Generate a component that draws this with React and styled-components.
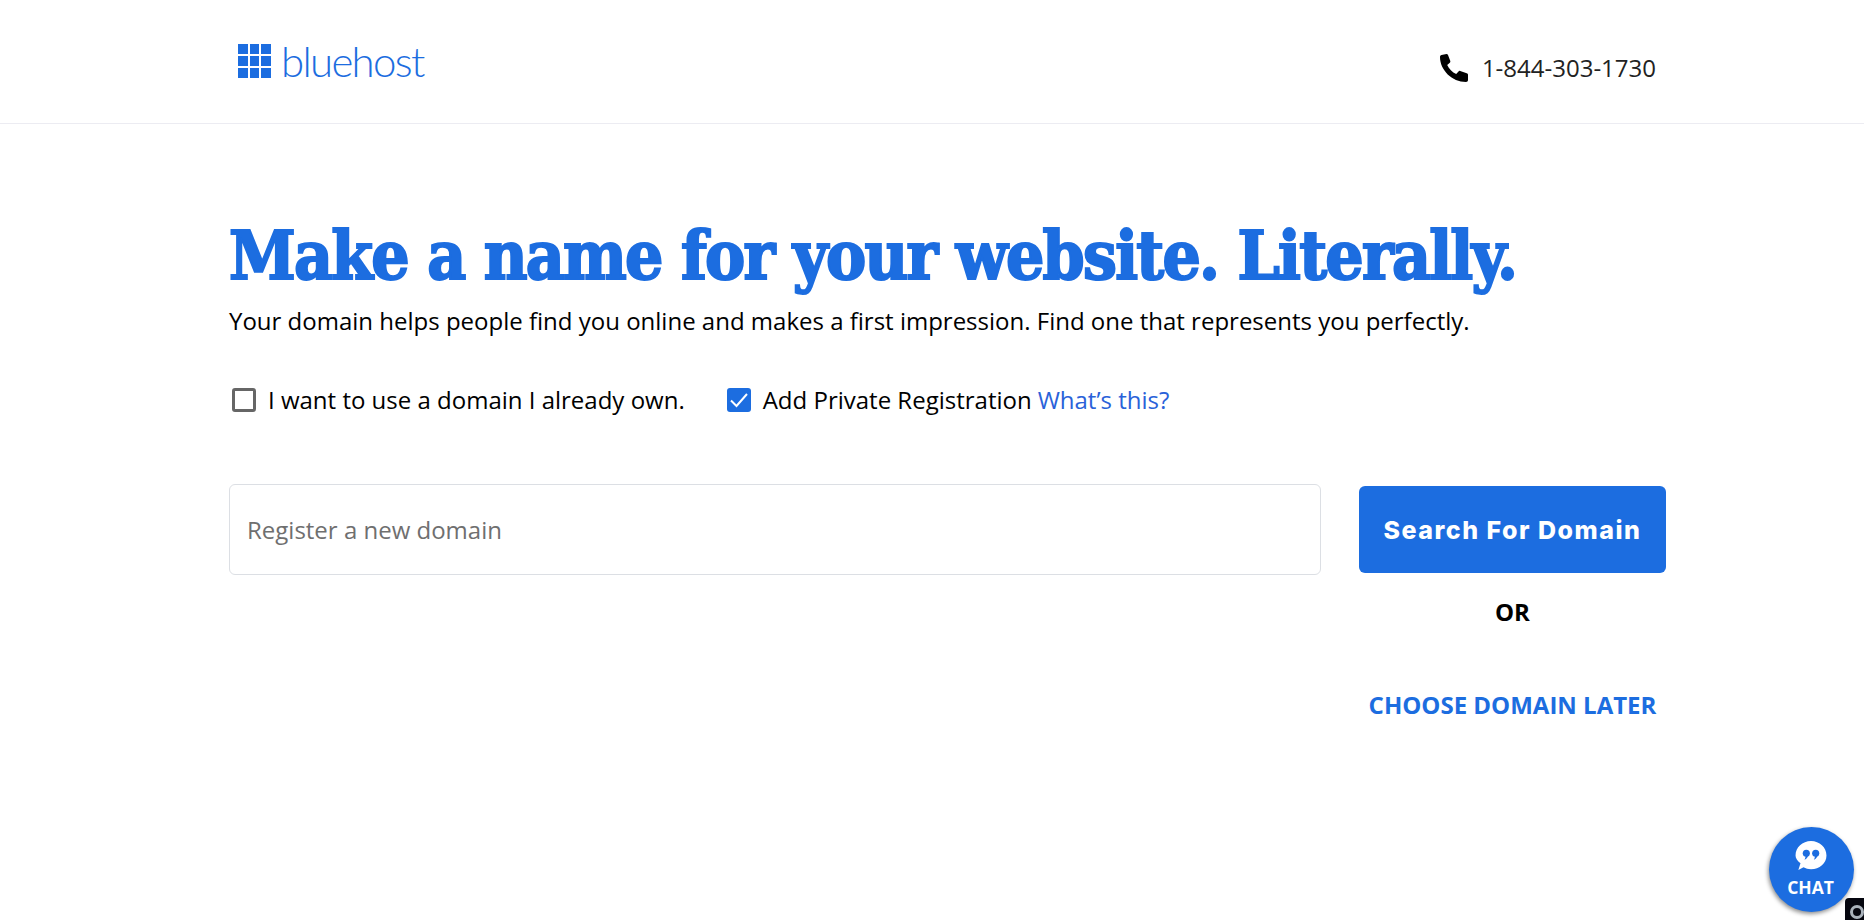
import React from 'react'
import styled, { createGlobalStyle } from 'styled-components'

const GlobalStyle = createGlobalStyle`
  html, body {
    margin: 0;
    padding: 0;
    background: #fff;
    font-family: "Open Sans", "Liberation Sans", sans-serif;
    overflow: hidden;
  }
  * { box-sizing: border-box; }
`

const Page = styled.div`
  height: 920px;
  position: relative;
  overflow: hidden;
`

const Header = styled.header`
  height: 124px;
  border-bottom: 1px solid #ececf2;
  padding: 0 208px 0 238px;
  display: flex;
  align-items: center;
  justify-content: space-between;
`

const Logo = styled.div`
  display: flex;
  align-items: center;
  gap: 10px;
  margin-bottom: 2px;
`

const LogoGrid = styled.div`
  width: 33px;
  height: 34px;
  display: grid;
  grid-template-columns: repeat(3, 1fr);
  grid-template-rows: repeat(3, 1fr);
  gap: 2px;
`

const LogoCell = styled.span`
  background: #1c6de0;
`

const LogoText = styled.span`
  font-family: Lato, sans-serif;
  font-weight: 300;
  font-size: 42px;
  letter-spacing: -1.7px;
  line-height: 44px;
  color: #1c6de0;
`

const Phone = styled.div`
  display: flex;
  align-items: center;
  gap: 14px;
  margin-top: 12px;
  font-size: 24px;
  color: #222;
`

const Main = styled.main`
  width: 1437px;
  margin-left: 229px;
  padding-top: 81px;
`

const Title = styled.h1`
  margin: 0;
  font-family: "DejaVu Serif Condensed", "DejaVu Serif", serif;
  font-stretch: condensed;
  font-weight: 700;
  font-size: 67px;
  letter-spacing: -1.75px;
  line-height: 101px;
  color: #1c6de0;
  -webkit-text-stroke: 2px #1c6de0;
  white-space: nowrap;
`

const Subtitle = styled.p`
  margin: 0;
  font-size: 24px;
  line-height: 30px;
  color: #000;
`

const Options = styled.div`
  display: flex;
  align-items: center;
  gap: 42px;
  margin-top: 48px;
  padding-left: 3px;
`

const Option = styled.label`
  display: flex;
  align-items: center;
  gap: 12px;
  font-size: 24px;
  line-height: 32px;
  color: #000;
`

const Box = styled.span`
  width: 24px;
  height: 24px;
  border-radius: 3px;
  display: flex;
  align-items: center;
  justify-content: center;
  background: ${props => (props.checked ? '#1c6de0' : '#fff')};
  border: ${props => (props.checked ? 'none' : '3px solid #666')};
`

const Link = styled.a`
  color: #2a62d9;
  margin-left: 6px;
`

const SearchRow = styled.div`
  display: flex;
  justify-content: space-between;
  align-items: flex-start;
  margin-top: 68px;
`

const DomainInput = styled.div`
  width: 1092px;
  height: 91px;
  border: 1px solid #dcdfe4;
  border-radius: 6px;
  padding-left: 17px;
  display: flex;
  align-items: center;
  font-size: 24px;
  color: #6f6f6f;
`

const Actions = styled.div`
  width: 307px;
  padding-top: 2px;
  display: flex;
  flex-direction: column;
  align-items: center;
`

const SearchButton = styled.button`
  width: 100%;
  height: 87px;
  border: none;
  border-radius: 6px;
  background: #1c6de0;
  color: #fff;
  font-family: Inter, sans-serif;
  font-weight: 800;
  font-size: 25px;
  letter-spacing: 1.5px;
`

const Or = styled.div`
  margin-top: 24px;
  font-size: 24px;
  line-height: 30px;
  font-weight: 700;
  color: #000;
`

const Later = styled.a`
  margin-top: 63px;
  font-size: 24px;
  line-height: 30px;
  font-weight: 700;
  color: #1c6de0;
`

const Chat = styled.div`
  position: absolute;
  left: 1769px;
  top: 827px;
  width: 85px;
  height: 85px;
  border-radius: 50%;
  background: #1c6de0;
  box-shadow: -1px 2px 4px rgba(0, 0, 0, 0.45);
  display: flex;
  flex-direction: column;
  align-items: center;
  padding: 14px 2px 0 0;
  gap: 5px;
  color: #fff;
  font-size: 17.5px;
  font-weight: 700;
  line-height: 22px;
`

const Badge = styled.div`
  position: absolute;
  left: 1845px;
  top: 898px;
  width: 19px;
  height: 22px;
  background: #05060f;
  border-top-left-radius: 4px;
  overflow: hidden;
`

const BadgeDot = styled.span`
  display: block;
  width: 14px;
  height: 14px;
  margin: 7px 0 0 5px;
  border-radius: 50%;
  border: 3px solid #a9b2bb;
`

const PhoneIcon = () => (
  <svg width="28" height="28" viewBox="0 0 28 28" fill="#000">
    <path d="M1.500 1 6.500 0c.8 0 1.200.4 1.500 1l2.300 6c.2.700 0 1.300-.5 1.700L7.200 11c1.800 4 5 7.200 9 9l2.300-2.600c.4-.5 1-.7 1.700-.5l6.500 2.300c.8.300 1.300.8 1.300 1.600V26c0 1.200-.8 2-2 2C12 28 0 16 0 3c0-1 .5-1.700 1.500-2z" />
  </svg>
)

const CheckIcon = () => (
  <svg width="20" height="20" viewBox="0 0 20 20" fill="none" stroke="#fff" strokeWidth="2">
    <path d="M2 10.500 7.500 16 18 4" />
  </svg>
)

const ChatIcon = () => (
  <svg width="32" height="30" viewBox="0 0 33 32">
    <path d="M16.5 0C25.6 0 33 6.900 33 15.400S25.600 30 16.500 30c-3 0-5.600-.7-8-2L3 31l2.300-7.200C2 21 0 18.500 0 15.400 0 6.900 7.400 0 16.500 0z" fill="#fff" />
    <circle cx="11.500" cy="13" r="3.800" fill="#1c6de0" />
    <path d="M13.500 14c0 3-1.500 5-4 6 1-1.500 1.300-3 1-5z" fill="#1c6de0" />
    <circle cx="21.500" cy="13" r="3.800" fill="#1c6de0" />
    <path d="M23.500 14c0 3-1.500 5-4 6 1-1.500 1.300-3 1-5z" fill="#1c6de0" />
  </svg>
)

const App = () => {
  return (
    <Page>
      <GlobalStyle />
      <Header>
        <Logo>
          <LogoGrid>
            {Array.from({ length: 9 }).map((_, i) => <LogoCell key={i} />)}
          </LogoGrid>
          <LogoText>bluehost</LogoText>
        </Logo>
        <Phone>
          <PhoneIcon />
          1-844-303-1730
        </Phone>
      </Header>
      <Main>
        <Title>Make a name for your website. Literally.</Title>
        <Subtitle>Your domain helps people find you online and makes a first impression. Find one that represents you perfectly.</Subtitle>
        <Options>
          <Option><Box />I want to use a domain I already own.</Option>
          <Option>
            <Box checked><CheckIcon /></Box>
            <span>Add Private Registration<Link>What’s this?</Link></span>
          </Option>
        </Options>
        <SearchRow>
          <DomainInput>Register a new domain</DomainInput>
          <Actions>
            <SearchButton>Search For Domain</SearchButton>
            <Or>OR</Or>
            <Later>CHOOSE DOMAIN LATER</Later>
          </Actions>
        </SearchRow>
      </Main>
      <Chat>
        <ChatIcon />
        CHAT
      </Chat>
      <Badge><BadgeDot /></Badge>
    </Page>
  )
}

export default App
